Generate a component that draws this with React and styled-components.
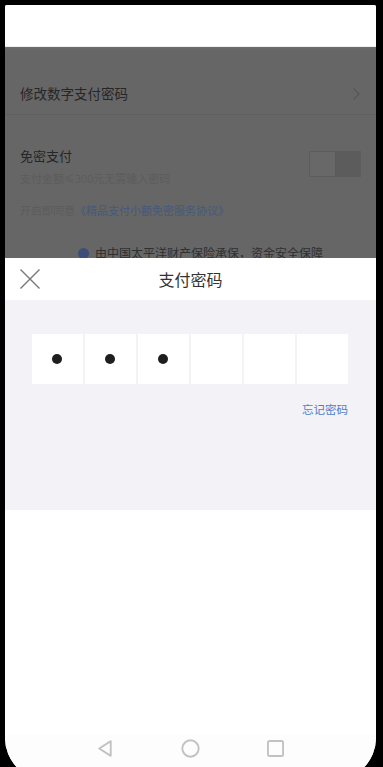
import React from "react";
import styled, { createGlobalStyle } from "styled-components";

const Global = createGlobalStyle`
  html, body { margin: 0; padding: 0; background: #000; overflow: hidden; }
  body { font-family: "Noto Sans CJK SC", "Noto Sans", sans-serif; }
`;

const Frame = styled.div`
  width: 383px;
  height: 767px;
  background: #000;
  padding: 5px 7px 0 5px;
  box-sizing: border-box;
  overflow: hidden;
`;

const Screen = styled.div`
  width: 371px;
  height: 775px;
  background: #fff;
  border-radius: 2px 2px 42px 42px;
  overflow: hidden;
  display: flex;
  flex-direction: column;
`;

const StatusBar = styled.div`
  height: 41px;
  background: #fff;
  border-bottom: 1px solid #eeeeee;
  flex: none;
`;

const Dimmed = styled.div`
  height: 211px;
  flex: none;
  background: linear-gradient(#6e6e6e 0, #676767 3px, #666 8px);
  display: flex;
  flex-direction: column;
  padding-top: 26px;
  box-sizing: border-box;
  overflow: hidden;
`;

const Row = styled.div`
  display: flex;
  align-items: center;
  justify-content: space-between;
  padding: 0 15px 0 15px;
  height: ${(p) => p.h}px;
  margin-top: ${(p) => p.mt || 0}px;
  border-bottom: ${(p) => (p.divider ? "1px solid #5f5f5f" : "none")};
  box-sizing: border-box;
  flex: none;
`;

const RowTitle = styled.div`
  font-size: ${(p) => p.size || 13.5}px;
  color: #262626;
  line-height: 1;
`;

const Col = styled.div`
  display: flex;
  flex-direction: column;
  gap: 11px;
  margin-top: 4px;
`;

const SubText = styled.div`
  font-size: 11px;
  color: #5c5c5c;
  line-height: 1;
`;

const Link = styled.span`
  color: #44597c;
`;

const Toggle = styled.div`
  width: 52px;
  height: 26px;
  border: 1px solid #5c5c5c;
  display: flex;
  box-sizing: border-box;
`;

const ToggleHalf = styled.div`
  flex: 1;
  background: ${(p) => p.bg};
  border-right: ${(p) => (p.split ? "1px solid #5a5a5a" : "none")};
`;

const AgreeLine = styled.div`
  padding: 0 15px;
  margin-top: 6px;
  font-size: 11px;
  color: #5c5c5c;
  line-height: 1;
  flex: none;
`;

const InsureLine = styled.div`
  display: flex;
  align-items: center;
  gap: 6px;
  margin-top: 31px;
  padding-left: 73px;
  font-size: 12px;
  line-height: 1;
  flex: none;
`;

const ShieldDot = styled.span`
  width: 11px;
  height: 11px;
  border-radius: 50%;
  background: #3c4f78;
  display: inline-block;
`;

const InsureText = styled.span`
  color: #303030;
`;

const SheetHeader = styled.div`
  height: 42px;
  flex: none;
  background: #fff;
  display: flex;
  align-items: center;
  justify-content: center;
  position: relative;
`;

const CloseBtn = styled.div`
  position: absolute;
  left: 14px;
  top: 10px;
  width: 22px;
  height: 22px;
  display: flex;
`;

const Title = styled.div`
  font-size: 16px;
  color: #333;
  line-height: 1;
`;

const PwdArea = styled.div`
  height: 210px;
  flex: none;
  background: #f3f2f6;
  padding: 34px 28px 0 27px;
  box-sizing: border-box;
  display: flex;
  flex-direction: column;
`;

const Boxes = styled.div`
  display: grid;
  grid-template-columns: repeat(6, 1fr);
  gap: 2.5px;
  height: 50px;
`;

const Box = styled.div`
  background: #fff;
  display: flex;
  align-items: center;
  justify-content: center;
`;

const Dot = styled.div`
  width: 10px;
  height: 10px;
  border-radius: 50%;
  background: #1e1e1e;
`;

const Forgot = styled.div`
  align-self: flex-end;
  margin-top: 20px;
  font-size: 11.5px;
  color: #4f7ccc;
  line-height: 1;
`;

const Filler = styled.div`
  flex: 1;
  background: #fff;
`;

const NavBar = styled.div`
  height: 45px;
  flex: none;
  display: flex;
  align-items: flex-start;
  justify-content: center;
  gap: 64px;
  padding-top: 3px;
  box-sizing: border-box;
  background: #fdfdfd;
`;

const NavIcon = styled.svg`
  width: 21px;
  height: 21px;
  display: block;
`;

export default function App() {
  const filled = 3;
  return (
    <>
      <Global />
      <Frame>
        <Screen>
          <StatusBar />
          <Dimmed>
            <Row h={42} divider>
              <RowTitle>修改数字支付密码</RowTitle>
              <svg width="9" height="14" viewBox="0 0 9 14">
                <path d="M1.5 1.5 L7 7 L1.5 12.5" fill="none" stroke="#575757" strokeWidth="1.3" />
              </svg>
            </Row>
            <Row h={70} mt={14}>
              <Col>
                <RowTitle size={13}>免密支付</RowTitle>
                <SubText>支付金额≤300元无需输入密码</SubText>
              </Col>
              <Toggle>
                <ToggleHalf bg="#686868" split />
                <ToggleHalf bg="#5c5c5c" />
              </Toggle>
            </Row>
            <AgreeLine>
              开启即同意<Link>《精品支付小额免密服务协议》</Link>
            </AgreeLine>
            <InsureLine>
              <ShieldDot />
              <InsureText>由中国太平洋财产保险承保，资金安全保障</InsureText>
            </InsureLine>
          </Dimmed>
          <SheetHeader>
            <CloseBtn>
              <svg width="22" height="22" viewBox="0 0 22 22">
                <path d="M1.5 1.5 L20.5 20.5 M20.5 1.5 L1.5 20.5" stroke="#777" strokeWidth="1.4" fill="none" />
              </svg>
            </CloseBtn>
            <Title>支付密码</Title>
          </SheetHeader>
          <PwdArea>
            <Boxes>
              {Array.from({ length: 6 }).map((_, i) => (
                <Box key={i}>{i < filled ? <Dot /> : null}</Box>
              ))}
            </Boxes>
            <Forgot>忘记密码</Forgot>
          </PwdArea>
          <Filler />
          <NavBar>
            <NavIcon viewBox="0 0 20 20">
              <path d="M15 3 L4 10 L15 17 Z" fill="none" stroke="#c2c2c2" strokeWidth="1.8" strokeLinejoin="round" />
            </NavIcon>
            <NavIcon viewBox="0 0 20 20">
              <circle cx="10" cy="10" r="7.8" fill="none" stroke="#c2c2c2" strokeWidth="1.8" />
            </NavIcon>
            <NavIcon viewBox="0 0 20 20">
              <rect x="2.8" y="2.8" width="14.4" height="14.4" rx="1.5" fill="none" stroke="#c2c2c2" strokeWidth="1.8" />
            </NavIcon>
          </NavBar>
        </Screen>
      </Frame>
    </>
  );
}
